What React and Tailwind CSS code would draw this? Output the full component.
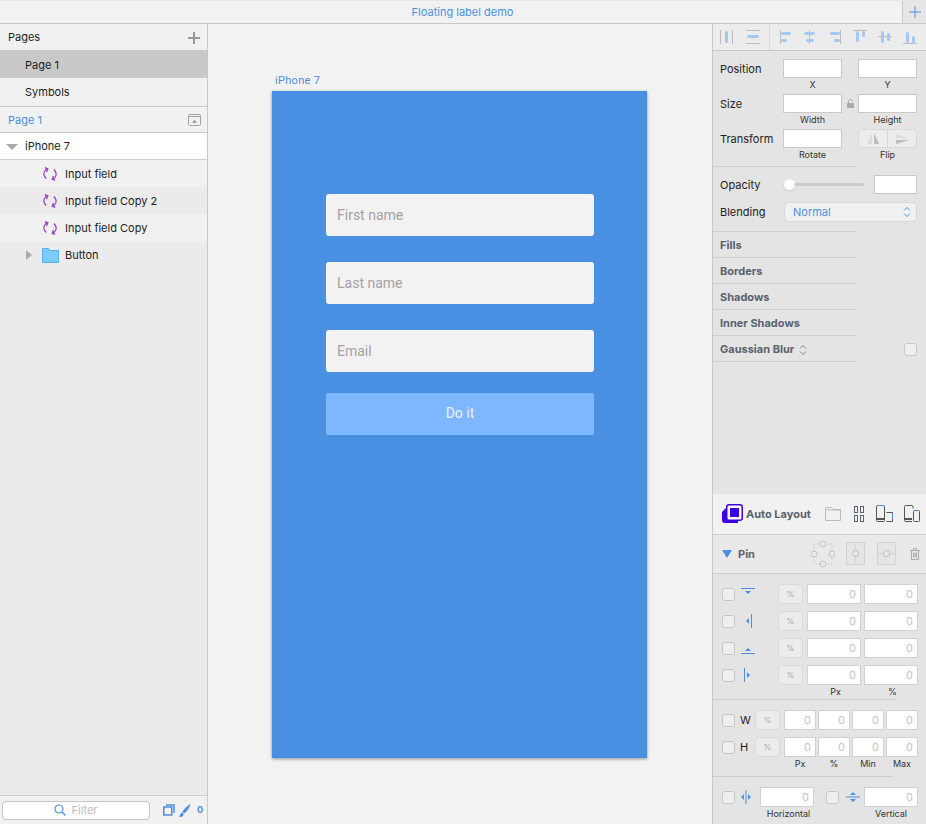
const sans = { fontFamily: 'Inter, "Liberation Sans", sans-serif' }

function Align({ lines, bars }) {
  return (
    <svg width="14" height="14" viewBox="0 0 14 14" className="shrink-0">
      {lines.map((l, i) => (
        <rect key={i} x={l[0]} y={l[1]} width={l[2]} height={l[3]} fill="#bdbdbd" />
      ))}
      {bars.map((b, i) => (
        <rect key={i} x={b[0]} y={b[1]} width={b[2]} height={b[3]} rx="1.500" fill="#a3c8f5" />
      ))}
    </svg>
  )
}

function Toolbar() {
  return (
    <div className="h-[27px] shrink-0 flex items-center pl-[7px] border-b border-[#c8c8c8] bg-[#ececec]">
      <Align lines={[[0, 0, 1, 14], [12, 0, 1, 14]]} bars={[[5, 1, 3, 12]]} />
      <div className="ml-3">
        <Align lines={[[0, 0, 14, 1], [0, 13, 14, 1]]} bars={[[1, 5, 12, 3]]} />
      </div>
      <div className="w-px h-[26px] bg-[#dcdcdc] ml-[9px] mr-2" />
      <div className="flex gap-[11px]">
        <Align lines={[[2, 0, 1, 14]]} bars={[[3, 2, 10, 3], [3, 9, 6, 3]]} />
        <Align lines={[[6, 0, 1, 14]]} bars={[[1, 2, 11, 3], [3, 9, 8, 3]]} />
        <Align lines={[[12, 0, 1, 14]]} bars={[[2, 2, 10, 3], [6, 9, 6, 3]]} />
        <Align lines={[[0, 0, 14, 1]]} bars={[[3, 1, 3, 11], [9, 1, 3, 6]]} />
        <Align lines={[[0, 6, 14, 1]]} bars={[[3, 1, 3, 12], [9, 3, 3, 8]]} />
        <Align lines={[[0, 13, 14, 1]]} bars={[[3, 2, 3, 11], [9, 6, 3, 7]]} />
      </div>
    </div>
  )
}

function Box({ className = '' }) {
  return <div className={`bg-white border border-[#c9c9c9] ${className}`} />
}

function PropRow({ label, first, second, lock, flip }) {
  return (
    <div className="h-[35px] flex">
      <div className="w-[63px] h-[19px] pt-[2px] flex items-center text-[11px] text-[#222]">{label}</div>
      <div className="w-[59px] flex flex-col items-center">
        <Box className="w-full h-[19px]" />
        <div className="text-[9px] leading-[14px] text-[#333]">{first}</div>
      </div>
      <div className="w-4 h-[19px] flex items-center justify-center">
        {lock && (
          <svg width="7" height="9" viewBox="0 0 7 9">
            <rect x="0" y="4" width="7" height="5" fill="#aaa" />
            <path d="M1.500 4V2.500a2 2 0 0 1 4 0" fill="none" stroke="#aaa" />
          </svg>
        )}
      </div>
      <div className="w-[59px] flex flex-col items-center">
        {flip ? (
          <div className="w-full h-[19px] flex bg-[#ececec] border border-[#d8d8d8] rounded-[4px]">
            <div className="w-1/2 flex items-center justify-center border-r border-[#d8d8d8]">
              <svg width="14" height="11" viewBox="0 0 14 11">
                <path d="M6 0v11H1z" fill="#dcdcdc" />
                <path d="M8 0v11h5z" fill="#bcbcbc" />
              </svg>
            </div>
            <div className="w-1/2 flex items-center justify-center">
              <svg width="14" height="12" viewBox="0 0 14 12">
                <path d="M1 5h13L1 1z" fill="#dcdcdc" />
                <path d="M1 7h13L1 11z" fill="#bcbcbc" />
              </svg>
            </div>
          </div>
        ) : (
          <Box className="w-full h-[19px]" />
        )}
        <div className="text-[9px] leading-[14px] text-[#333]">{second}</div>
      </div>
    </div>
  )
}

function SectionRow({ children }) {
  return (
    <div className="w-[143px] h-[26px] pl-[7px] pt-[2px] flex items-center gap-[5px] border-b border-[#cfcfcf] text-[11px] font-bold text-[#59626d]">
      {children}
    </div>
  )
}

function Updown({ color = '#7a8794', className = '' }) {
  return (
    <svg width="8" height="12" viewBox="0 0 8 12" fill="none" stroke={color} strokeWidth="1" className={className}>
      <path d="M1 4.500L4 1.500l3 3" />
      <path d="M1 7.500l3 3 3-3" />
    </svg>
  )
}

function Check({ className = '' }) {
  return <div className={`w-[13px] h-[13px] shrink-0 bg-[#efefef] border border-[#c6c6c6] rounded-[3px] ${className}`} />
}

function Pct({ className = '' }) {
  return (
    <div className={`w-[25px] h-5 shrink-0 flex items-center justify-center bg-[#ececec] border border-[#dadada] rounded-[4px] text-[8px] text-[#aaa] ${className}`}>
      %
    </div>
  )
}

function Num({ className = '' }) {
  return (
    <div className={`h-5 bg-white border border-[#d2d2d2] flex items-center justify-end pr-1 text-[11px] text-[#c4c4c4] ${className}`}>
      0
    </div>
  )
}

function PinIcon({ kind }) {
  const paths = {
    top: <><rect x="1" y="2" width="14" height="1" /><path d="M5 5h6L8 8z" /></>,
    left: <><rect x="11" y="1" width="1" height="14" /><path d="M9 5v6L6 8z" /></>,
    bottom: <><rect x="1" y="13" width="14" height="1" /><path d="M5 11h6L8 8z" /></>,
    right: <><rect x="4" y="1" width="1" height="14" /><path d="M7 5v6l3-3z" /></>,
  }
  return (
    <svg width="16" height="16" viewBox="0 0 16 16" fill="#4a90e2" className="shrink-0">
      {paths[kind]}
    </svg>
  )
}

function PinRow({ kind, last }) {
  return (
    <div className={`flex items-center pl-[9px] ${last ? '' : 'mb-[7px]'}`}>
      <Check />
      <div className="w-[44px] pl-[5px] flex">
        <PinIcon kind={kind} />
      </div>
      <Pct className="-ml-px" />
      <Num className="w-[54px] ml-[4px]" />
      <Num className="w-[54px] ml-[3px]" />
    </div>
  )
}

function SizeRow({ label }) {
  return (
    <div className="flex items-center pl-[9px] h-5">
      <Check />
      <div className="w-5 pl-[5px] text-[11px] text-[#222]">{label}</div>
      <Pct />
      <div className="flex gap-[2px] ml-1">
        <Num className="w-8" />
        <Num className="w-8" />
        <Num className="w-8" />
        <Num className="w-8" />
      </div>
    </div>
  )
}

function PinPanel() {
  return (
    <div className="mt-auto shrink-0 pb-[3px]">
      <div className="h-[41px] flex items-center pl-[9px] bg-[#f1f1f1] border-b border-[#cdcdcd]">
        <svg width="21" height="20" viewBox="0 0 21 20" className="shrink-0">
          <path d="M4 4h12v15H3a3 3 0 0 1-3-3V8z" fill="#3f00e0" />
          <rect x="4" y="0" width="17" height="17" rx="3" fill="#3f00e0" />
          <rect x="5.500" y="1.500" width="14" height="14" rx="1.500" fill="#fff" />
          <rect x="8" y="4" width="9" height="9" fill="#3f00e0" />
        </svg>
        <span className="ml-[3px] text-[11px] font-bold text-[#59626d]">Auto Layout</span>
        <svg width="16" height="14" viewBox="0 0 16 14" fill="none" stroke="#bbb" className="ml-[14px]">
          <path d="M.5 13.500V.5h6l1.500 2h7.500v11z" />
          <path d="M.5 3h15" />
        </svg>
        <svg width="10" height="16" viewBox="0 0 10 16" fill="none" stroke="#59626d" className="ml-[13px]">
          <rect x=".5" y=".5" width="3" height="6" />
          <rect x="6.500" y=".5" width="3" height="6" />
          <rect x=".5" y="9.500" width="3" height="6" />
          <rect x="6.500" y="9.500" width="3" height="6" />
        </svg>
        <svg width="17" height="18" viewBox="0 0 17 18" fill="none" stroke="#555" className="ml-3">
          <rect x=".5" y=".5" width="8" height="16" rx="1" />
          <path d="M.5 14h8" strokeWidth="2" />
          <path d="M2 .5h5" stroke="#4a90e2" />
          <path d="M10.500 7.500h6v9h-6" />
          <path d="M16.500 9v5" stroke="#4a90e2" />
        </svg>
        <svg width="16" height="18" viewBox="0 0 16 18" fill="none" stroke="#555" className="ml-[11px]">
          <path d="M9 3.500v-2a1 1 0 0 0-1-1H1.500a1 1 0 0 0-1 1v14a1 1 0 0 0 1 1H8" />
          <path d="M.5 14H8" strokeWidth="2" />
          <rect x="9.500" y="5.500" width="6" height="11" rx="1" />
          <path d="M11 5.500h3" stroke="#4a90e2" />
        </svg>
      </div>
      <div className="h-[39px] flex items-center pl-[9px] bg-[#e9e9e9] border-b border-[#cdcdcd]">
        <svg width="10" height="8" viewBox="0 0 10 8" className="shrink-0">
          <path d="M0 0h10L5 8z" fill="#4a90e2" />
        </svg>
        <span className="ml-[6px] w-[73px] text-[11px] font-bold text-[#59626d]">Pin</span>
        <svg width="24" height="28" viewBox="0 0 24 28" fill="none" stroke="#c4c4c4">
          <path d="M3 14V4h18v20H3z" strokeDasharray="1.500 1.500" />
          <circle cx="12" cy="4" r="3" fill="#e9e9e9" />
          <circle cx="3" cy="14" r="3" fill="#e9e9e9" />
          <circle cx="21" cy="14" r="3" fill="#e9e9e9" />
          <circle cx="12" cy="24" r="3" fill="#e9e9e9" />
        </svg>
        <svg width="20" height="24" viewBox="0 0 20 24" fill="none" stroke="#d2d2d2" className="ml-[11px]">
          <rect x=".5" y=".5" width="18" height="22" fill="#e5e5e5" />
          <path d="M9.500 1v22" />
          <circle cx="9.500" cy="11.500" r="3" fill="#e9e9e9" stroke="#bbb" />
        </svg>
        <svg width="20" height="24" viewBox="0 0 20 24" fill="none" stroke="#d2d2d2" className="ml-[11px]">
          <rect x=".5" y=".5" width="18" height="22" fill="#e5e5e5" />
          <path d="M1 11.500h18" />
          <circle cx="9.500" cy="11.500" r="3" fill="#e9e9e9" stroke="#bbb" />
        </svg>
        <svg width="10" height="12" viewBox="0 0 10 12" fill="none" stroke="#aaa" className="ml-[13px]">
          <path d="M0 2.500h10M3.500 2.500V.5h3v2M1.500 2.500v9h7v-9M3.500 4.500v5M5 4.500v5M6.500 4.500v5" />
        </svg>
      </div>
      <div className="pt-[10px]">
        <PinRow kind="top" />
        <PinRow kind="left" />
        <PinRow kind="bottom" />
        <PinRow kind="right" last />
        <div className="flex text-[9px] leading-[13px] text-[#333]">
          <div className="w-[94px]" />
          <div className="w-[57px] text-center">Px</div>
          <div className="w-[57px] text-center">%</div>
        </div>
      </div>
      <div className="w-[183px] h-px bg-[#cdcdcd] mt-[1px]" />
      <div className="pt-[10px]">
        <div className="mb-[7px]">
          <SizeRow label="W" />
        </div>
        <SizeRow label="H" />
        <div className="flex text-[9px] leading-[13px] text-[#333] pl-[70px]">
          <div className="w-[34px] text-center">Px</div>
          <div className="w-[34px] text-center">%</div>
          <div className="w-[34px] text-center">Min</div>
          <div className="w-[34px] text-center">Max</div>
        </div>
      </div>
      <div className="w-[180px] h-px bg-[#cdcdcd] mt-[6px]" />
      <div className="pt-[10px] pl-[9px]">
        <div className="flex items-center h-5">
          <Check />
          <svg width="12" height="14" viewBox="0 0 12 14" fill="#4a90e2" className="ml-[5px] shrink-0">
            <rect x="5.500" y="0" width="1" height="14" />
            <path d="M4 4v6L1 7zM8 4v6l3-3z" />
          </svg>
          <Num className="w-[54px] ml-2" />
          <Check className="ml-3" />
          <svg width="14" height="12" viewBox="0 0 14 12" fill="#4a90e2" className="ml-[7px] shrink-0">
            <rect x="0" y="5.500" width="14" height="1" />
            <path d="M4 4h6L7 1zM4 8h6l-3 3z" />
          </svg>
          <Num className="w-[54px] ml-1" />
        </div>
        <div className="flex text-[9px] leading-[14px] text-[#333]">
          <div className="w-10" />
          <div className="w-[53px] text-center">Horizontal</div>
          <div className="w-[49px]" />
          <div className="w-[54px] text-center">Vertical</div>
        </div>
      </div>
    </div>
  )
}

function Inspector() {
  return (
    <div className="w-[214px] shrink-0 flex flex-col bg-[#e4e4e4] border-l border-[#c8c8c8]">
      <Toolbar />
      <div className="pl-[7px] pt-2">
        <PropRow label="Position" first="X" second="Y" />
        <PropRow label="Size" first="Width" second="Height" lock />
        <PropRow label="Transform" first="Rotate" second="Flip" flip />
      </div>
      <div className="w-[143px] h-px mt-[2px] bg-[#cfcfcf]" />
      <div className="pl-[7px] pt-2 pr-2">
        <div className="h-[19px] flex items-center text-[11px] text-[#222]">
          <div className="w-[64px] pt-[2px]">Opacity</div>
          <div className="relative w-[80px] h-[3px] bg-[#cbcbcb] rounded-full">
            <div className="absolute left-0 -top-1 w-[11px] h-[11px] rounded-full bg-white shadow-sm" />
          </div>
          <Box className="w-[43px] h-[19px] ml-[10px]" />
        </div>
        <div className="h-5 mt-2 flex items-center text-[11px] text-[#222]">
          <div className="w-[64px]">Blending</div>
          <div className="w-[133px] h-5 flex items-center justify-between pl-2 pr-[5px] bg-[#f1f1f1] border border-[#d8d8d8] rounded-[4px] text-[#4a90e2]">
            Normal
            <Updown color="#4a90e2" />
          </div>
        </div>
      </div>
      <div className="w-[143px] h-px mt-[9px] bg-[#cfcfcf]" />
      <SectionRow>Fills</SectionRow>
      <SectionRow>Borders</SectionRow>
      <SectionRow>Shadows</SectionRow>
      <SectionRow>Inner Shadows</SectionRow>
      <div className="flex">
        <SectionRow>
          Gaussian Blur
          <Updown />
        </SectionRow>
        <div className="h-[26px] flex items-center ml-[48px]">
          <Check className="w-3 h-3" />
        </div>
      </div>
      <PinPanel />
    </div>
  )
}

function Sync() {
  return (
    <svg width="14" height="14" viewBox="0 0 14 14" fill="none" stroke="#9b3ec8" strokeWidth="1.300" className="shrink-0">
      <path d="M4.500 1.800C1.500 3 .3 6 1.300 8.800c.4 1 1 1.900 1.900 2.700" />
      <path d="M1.800.6l3 1.300-1.300 3" />
      <path d="M9.500 12.200c3-1.200 4.200-4.200 3.200-7-.4-1-1-1.900-1.900-2.700" />
      <path d="M12.200 13.400l-3-1.300 1.300-3" />
    </svg>
  )
}

function LayerRow({ name, tone }) {
  return (
    <div className={`h-[27px] pt-px flex items-center pl-[43px] gap-2 ${tone}`}>
      <Sync />
      <span>{name}</span>
    </div>
  )
}

function Sidebar() {
  return (
    <div className="w-[208px] shrink-0 flex flex-col bg-[#f1f1f1] border-r border-[#c8c8c8] text-[11px] text-[#1c1c1c]">
      <div className="h-[27px] pt-px flex items-center justify-between pl-2 pr-[7px] border-b border-[#c8c8c8]">
        Pages
        <svg width="12" height="12" viewBox="0 0 12 12" fill="#9a9a9a">
          <rect x="5" y="0" width="2" height="12" />
          <rect x="0" y="5" width="12" height="2" />
        </svg>
      </div>
      <div className="h-[27px] pt-px flex items-center pl-[25px] bg-[#c9c9c9]">Page 1</div>
      <div className="h-[29px] flex items-center pl-[25px] border-b border-[#c8c8c8]">Symbols</div>
      <div className="h-[26px] pt-px flex items-center justify-between pl-2 pr-[6px] border-b border-[#c8c8c8] text-[#4a90e2]">
        Page 1
        <svg width="13" height="12" viewBox="0 0 13 12" fill="none">
          <rect x=".5" y=".5" width="12" height="11" rx="1" stroke="#a0a0a0" />
          <path d="M.5 2.500h12" stroke="#a0a0a0" />
          <path d="M4 9h5L6.500 5.500z" fill="#a0a0a0" />
        </svg>
      </div>
      <div className="h-[27px] pt-px flex items-center pl-[6px] bg-white border-b border-[#d0d0d0]">
        <svg width="12" height="6" viewBox="0 0 12 6" className="shrink-0">
          <path d="M0 0h12L6 6z" fill="#aaa" />
        </svg>
        <span className="ml-[7px]">iPhone 7</span>
      </div>
      <LayerRow name="Input field" tone="bg-[#f1f1f1]" />
      <LayerRow name="Input field Copy 2" tone="bg-[#ebebeb]" />
      <LayerRow name="Input field Copy" tone="bg-[#f1f1f1]" />
      <div className="flex-1 bg-[#ebebeb]">
        <div className="h-[27px] pt-px flex items-center pl-[26px]">
          <svg width="6" height="10" viewBox="0 0 6 10" className="shrink-0">
            <path d="M0 0l6 5-6 5z" fill="#aaa" />
          </svg>
          <svg width="17" height="15" viewBox="0 0 17 15" className="ml-[10px] shrink-0">
            <path d="M.5 14.500V.5h6l1.500 2h8.500v12z" fill="#7fcbfb" stroke="#5dade6" />
          </svg>
          <span className="ml-[6px]">Button</span>
        </div>
      </div>
      <div className="h-[29px] shrink-0 flex items-center pl-[2px] bg-[#f1f1f1] border-t border-[#cfcfcf]">
        <div className="w-[148px] h-[19px] flex items-center justify-center gap-[5px] bg-white border border-[#c4c4c4] rounded-[4px] text-[#bdbdbd]">
          <svg width="12" height="12" viewBox="0 0 12 12" fill="none" stroke="#4a90e2" strokeWidth="1.200">
            <circle cx="5" cy="5" r="4" />
            <path d="M8 8l3.500 3.500" />
          </svg>
          Filter
        </div>
        <svg width="12" height="12" viewBox="0 0 12 12" fill="none" stroke="#4a90e2" strokeWidth="1.500" className="ml-[13px]">
          <rect x=".75" y="3" width="8" height="8" />
          <path d="M3 1h8v8" />
        </svg>
        <svg width="12" height="13" viewBox="0 0 12 13" fill="#4a90e2" className="ml-1">
          <path d="M11.500 0C8 2 4.500 5.500 3.500 8L5 9.500C7.500 8 10.500 4 11.500 0z" />
          <path d="M3 8.500C1 9 1.500 11.500 0 13c2 0 5-.5 4.500-3z" />
        </svg>
        <span className="ml-[6px] text-[9px] font-bold text-[#4a90e2]">0</span>
      </div>
    </div>
  )
}

function Field({ label, className = '' }) {
  return (
    <div className={`w-[268px] h-[42px] flex items-center pl-[11px] bg-[#f2f2f2] rounded-[3px] text-[14px] text-[#a3a3a3] ${className}`}>
      {label}
    </div>
  )
}

function Canvas() {
  return (
    <div className="flex-1 bg-[#f2f2f2] pl-16 pt-12" style={{ fontFamily: 'Roboto, sans-serif' }}>
      <div className="h-[19px] pl-[3px] flex items-center text-[11px] tracking-[0.3px] text-[#4a90e2]">iPhone 7</div>
      <div className="w-[375px] h-[667px] bg-[#4a90e2] pl-[54px] pt-[103px] shadow-[0_1px_3px_rgba(0,0,0,0.4)]">
        <Field label="First name" className="mb-[26px]" />
        <Field label="Last name" className="mb-[26px]" />
        <Field label="Email" className="mb-[21px]" />
        <div className="w-[268px] h-[42px] pb-[2px] flex items-center justify-center bg-[#7eb7ff] rounded-[2px] text-[14px] text-[#eaf3ff]">
          Do it
        </div>
      </div>
    </div>
  )
}

export default function App() {
  return (
    <div className="w-[926px] h-[824px] flex flex-col overflow-hidden bg-[#f2f2f2]" style={sans}>
      <div className="h-6 shrink-0 flex bg-[#f2f2f2] border-t border-[#e6e6e6] border-b border-b-[#c8c8c8]">
        <div className="flex-1 flex items-center justify-center pl-[23px] text-[11px] text-[#4a90e2]">
          Floating label demo
        </div>
        <div className="w-[24px] flex items-center justify-center bg-[#e6e6e6] border-l border-[#c8c8c8]">
          <svg width="12" height="12" viewBox="0 0 12 12" fill="#4a90e2">
            <rect x="5.500" y="0" width="1" height="12" />
            <rect x="0" y="5.500" width="12" height="1" />
          </svg>
        </div>
      </div>
      <div className="flex-1 flex min-h-0">
        <Sidebar />
        <Canvas />
        <Inspector />
      </div>
    </div>
  )
}
